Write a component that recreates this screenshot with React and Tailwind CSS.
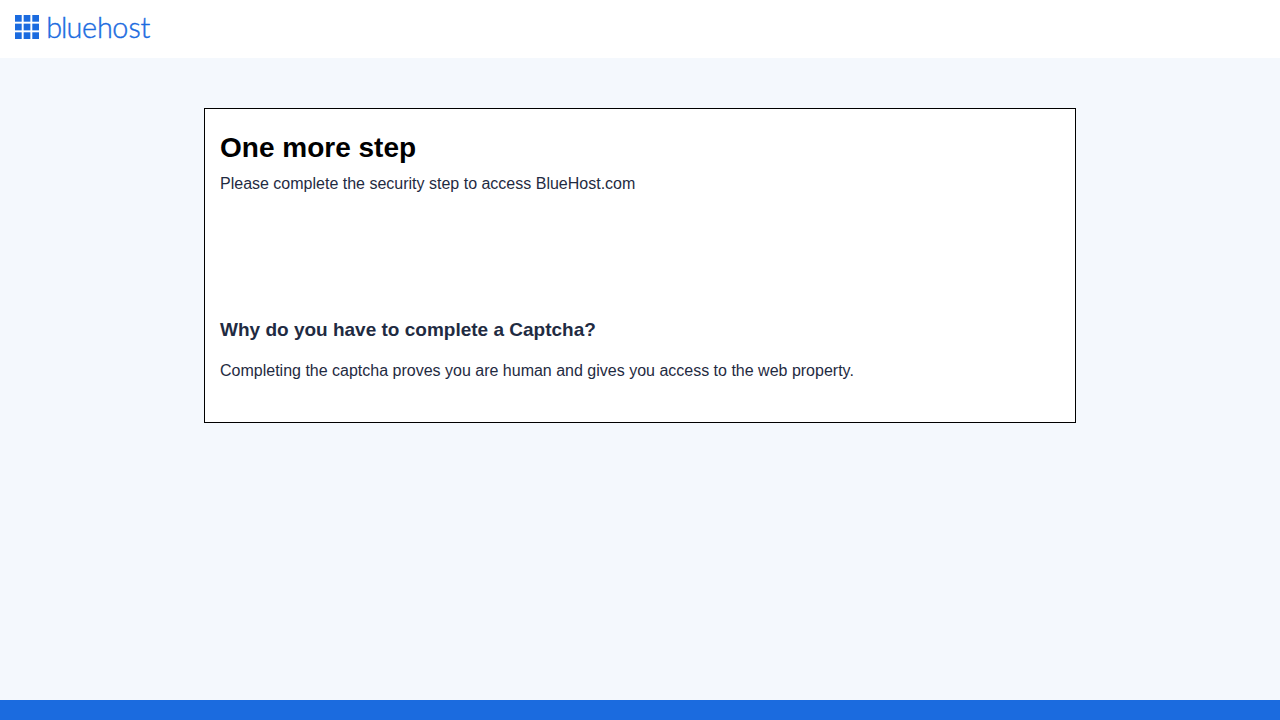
function Logo() {
  return (
    <svg width="150" height="32" viewBox="0 0 150 32" className="block overflow-visible" role="img" aria-label="bluehost">
      {[0, 8.65, 17.3].map((y) =>
        [0, 8.65, 17.3].map((x) => (
          <rect key={`${x}-${y}`} x={x} y={y} width="6.7" height="6.7" fill="#1b6bdf" />
        ))
      )}
      <text
        x="31.2 45.9 51.5 66.9 82.1 97.2 113.6 125.5"
        y="0"
        transform="translate(0 23.3) scale(1 1.03)"
        fontSize="28.8"
        fill="#1b6bdf"
        stroke="#1b6bdf"
        strokeWidth="0.4"
        className="font-[Lato,sans-serif] font-light"
      >
        bluehost
      </text>
    </svg>
  );
}

export default function App() {
  return (
    <div className="flex h-screen flex-col bg-[#f4f8fd] font-['Liberation_Sans',Arial,sans-serif] text-[#1f2b42]">
      <header className="h-[58px] shrink-0 bg-white px-[15px] pt-[15px]">
        <Logo />
      </header>
      <main className="flex-1 pt-[50px]">
        <section className="mx-auto h-[315px] w-[872px] border border-black bg-white px-[15px] pt-[23px]">
          <h1 className="text-[28px] leading-8 font-bold text-black">One more step</h1>
          <p className="mt-2 text-base leading-6">Please complete the security step to access BlueHost.com</p>
          <div className="h-[122px]" />
          <h2 className="text-[19px] leading-6 font-bold">Why do you have to complete a Captcha?</h2>
          <p className="mt-[17px] text-base leading-6">
            Completing the captcha proves you are human and gives you access to the web property.
          </p>
        </section>
      </main>
      <footer className="h-5 shrink-0 bg-[#1b6bdf]" />
    </div>
  );
}
